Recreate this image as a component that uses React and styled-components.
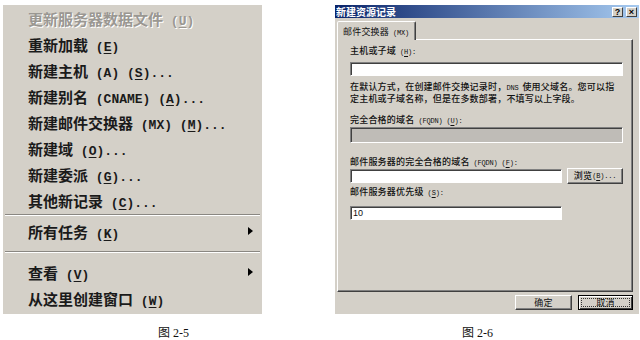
import React from 'react';
import styled, { createGlobalStyle } from 'styled-components';

const GlobalStyle = createGlobalStyle`
    html, body {
        margin: 0;
        padding: 0;
        background: #ffffff;
    }
    body {
        width: 640px;
        height: 340px;
        overflow: hidden;
    }
`;

const FACE = '#d4d0c8';
const CJK = '"Noto Sans CJK SC", "Noto Sans", sans-serif';

const Page = styled.div`
    display: flex;
    align-items: flex-start;
    padding: 5px 0 0 3px;
    gap: 73px;
`;

const Figure = styled.div`
    display: flex;
    flex-flow: column;
`;

const Caption = styled.div`
    margin-top: 12px;
    padding-left: ${({ offset }) => offset}px;
    font-family: "Liberation Serif", "Noto Sans CJK SC", serif;
    font-size: 12px;
    line-height: 14px;
    color: #111;
`;

/* ---------- context menu (图 2-5) ---------- */

const Menu = styled.div`
    width: 259px;
    height: 309px;
    box-sizing: border-box;
    background: ${FACE};
    font-family: ${CJK};
    font-size: 15px;
    font-weight: bold;
`;

const MenuItem = styled.div`
    height: 26px;
    display: flex;
    align-items: center;
    justify-content: space-between;
    padding: 0 9px 0 25px;
    color: ${({ disabled }) => disabled ? '#9a9792' : '#1a1a1a'};
    text-shadow: ${({ disabled }) => disabled ? '1px 1px 0 #ffffff' : 'none'};
    white-space: nowrap;
`;

const Latin = styled.span`
    font-family: "Liberation Mono", "DejaVu Sans Mono", monospace;
    font-size: 13px;
    font-weight: bold;
    line-height: 13px;
`;

const Key = styled.span`
    text-decoration: underline;
    text-underline-offset: 2px;
`;

const Arrow = styled.span`
    width: 0;
    height: 0;
    border-left: 5px solid #000;
    border-top: 4px solid transparent;
    border-bottom: 4px solid transparent;
`;

const MenuSeparator = styled.div`
    margin: ${({ above, below }) => `${above}px 2px ${below}px`};
    border-top: 1px solid #8a8782;
    border-bottom: 1px solid #ffffff;
`;

const MENU = [
    { text: '更新服务器数据文件', pre: ' (', key: 'U', post: ')', disabled: true },
    { text: '重新加载', pre: ' (', key: 'E', post: ')' },
    { text: '新建主机', pre: ' (A) (', key: 'S', post: ')...' },
    { text: '新建别名', pre: ' (CNAME) (', key: 'A', post: ')...' },
    { text: '新建邮件交换器', pre: ' (MX) (', key: 'M', post: ')...' },
    { text: '新建域', pre: ' (', key: 'O', post: ')...' },
    { text: '新建委派', pre: ' (', key: 'G', post: ')...' },
    { text: '其他新记录', pre: ' (', key: 'C', post: ')...' },
    { sep: true, above: 1, below: 2 },
    { text: '所有任务', pre: ' (', key: 'K', post: ')', sub: true },
    { sep: true, above: 7, below: 6 },
    { text: '查看', pre: ' (', key: 'V', post: ')', sub: true },
    { text: '从这里创建窗口', pre: ' (', key: 'W', post: ')' },
];

const ContextMenu = () => (
    <Menu>
        {MENU.map((item, index) => item.sep
            ? <MenuSeparator key={index} above={item.above} below={item.below} />
            : (
                <MenuItem key={index} disabled={item.disabled}>
                    <span>
                        {item.text}
                        <Latin>{item.pre}<Key>{item.key}</Key>{item.post}</Latin>
                    </span>
                    {item.sub && <Arrow />}
                </MenuItem>
            ))}
    </Menu>
);

/* ---------- dialog (图 2-6) ---------- */

const Dialog = styled.div`
    width: 304px;
    height: 309px;
    display: flex;
    flex-flow: column;
    background: ${FACE};
    font-family: ${CJK};
    font-size: 9px;
    letter-spacing: 0.2px;
    color: #111;
`;

const TitleBar = styled.div`
    height: 13px;
    display: flex;
    align-items: center;
    justify-content: space-between;
    padding: 0 2px 0 1px;
    background: linear-gradient(to right, #0a246a, #a6caf0);
`;

const Title = styled.div`
    color: #ffffff;
    font-size: 10px;
    font-weight: bold;
    line-height: 13px;
    letter-spacing: 0;
`;

const TitleButtons = styled.div`
    display: flex;
    gap: 3px;
`;

const TitleButton = styled.div`
    width: 11px;
    height: 10px;
    box-sizing: border-box;
    display: flex;
    align-items: center;
    justify-content: center;
    background: ${FACE};
    border: 1px solid;
    border-color: #ffffff #404040 #404040 #ffffff;
    font-family: "Liberation Sans", sans-serif;
    font-size: 9px;
    font-weight: bold;
    line-height: 8px;
    color: #000;
`;

const Body = styled.div`
    flex: 1;
    display: flex;
    flex-flow: column;
    padding: 3px 6px 0 2px;
`;

const Tab = styled.div`
    align-self: flex-start;
    width: 79px;
    height: 19px;
    box-sizing: border-box;
    margin-bottom: -1px;
    padding: 4px 0 0 5px;
    background: ${FACE};
    border: 1px solid;
    border-bottom: none;
    border-color: #ffffff #404040 transparent #ffffff;
    border-radius: 2px 2px 0 0;
    box-shadow: inset -1px 0 #808080;
    line-height: 12px;
    white-space: nowrap;
    position: relative;
    z-index: 1;
`;

const Panel = styled.div`
    height: 253px;
    box-sizing: border-box;
    padding: 5px 0 0 12px;
    border: 1px solid;
    border-color: #ffffff #404040 #404040 #ffffff;
    box-shadow: inset -1px -1px #808080;
    font-weight: 500;
`;

const Label = styled.div`
    height: 12px;
    line-height: 12px;
    margin-top: ${({ gap }) => gap || 0}px;
    white-space: nowrap;
`;

const Input = styled.div`
    width: ${({ width }) => width}px;
    height: ${({ height }) => height || 14}px;
    box-sizing: border-box;
    margin-top: ${({ gap }) => gap || 0}px;
    padding: 1px 2px;
    background: ${({ disabled }) => disabled ? '#bfbcb7' : '#ffffff'};
    border: 1px solid;
    border-color: #808080 #ffffff #ffffff #808080;
    box-shadow: inset 1px 1px #404040;
    font-family: "Liberation Sans", sans-serif;
    font-size: 9px;
    font-weight: normal;
    line-height: 10px;
    letter-spacing: 0;
`;

const Note = styled.div`
    margin-top: 5px;
    white-space: nowrap;
`;

const NoteLine = styled.div`
    height: 12px;
    line-height: 12px;
`;

const Row = styled.div`
    display: flex;
    align-items: center;
    gap: 5px;
    margin-top: ${({ gap }) => gap || 0}px;
`;

const Button = styled.div`
    width: ${({ width }) => width}px;
    height: ${({ height }) => height}px;
    box-sizing: border-box;
    display: flex;
    align-items: center;
    justify-content: center;
    background: ${FACE};
    border: 1px solid;
    border-color: ${({ primary }) => primary ? '#000' : '#ffffff #404040 #404040 #ffffff'};
    box-shadow: ${({ primary }) => primary
        ? 'inset 1px 1px #ffffff, inset -1px -1px #404040'
        : 'inset -1px -1px #808080'};
    line-height: 10px;
    white-space: nowrap;
`;

const FocusRing = styled.span`
    flex: 1;
    align-self: stretch;
    margin: 2px;
    display: flex;
    align-items: center;
    justify-content: center;
    border: 1px dotted #333;
`;

const Mono = styled.span`
    font-family: "Liberation Mono", monospace;
    font-size: 7px;
    line-height: 7px;
    letter-spacing: -0.2px;
`;

const Footer = styled.div`
    display: flex;
    justify-content: flex-end;
    gap: 6px;
    margin-top: 3px;
`;

const RecordDialog = () => (
    <Dialog>
        <TitleBar>
            <Title>新建资源记录</Title>
            <TitleButtons>
                <TitleButton>?</TitleButton>
                <TitleButton>×</TitleButton>
            </TitleButtons>
        </TitleBar>
        <Body>
            <Tab>邮件交换器<Mono> (MX)</Mono></Tab>
            <Panel>
                <Label>主机或子域<Mono> (<Key>H</Key>):</Mono></Label>
                <Input width={273} gap={5} />
                <Note>
                    <NoteLine>在默认方式，在创建邮件交换记录时，<Mono>DNS </Mono>使用父域名。您可以指</NoteLine>
                    <NoteLine>定主机或子域名称，但是在多数部署，不填写以上字段。</NoteLine>
                </Note>
                <Label gap={9}>完全合格的域名<Mono> (FQDN) (<Key>U</Key>):</Mono></Label>
                <Input width={273} height={16} gap={1} disabled />
                <Label gap={13}>邮件服务器的完全合格的域名<Mono> (FQDN) (<Key>F</Key>):</Mono></Label>
                <Row>
                    <Input width={212} />
                    <Button width={56} height={16}>浏览<Mono> (<Key>B</Key>)...</Mono></Button>
                </Row>
                <Label gap={2}>邮件服务器优先级<Mono> (<Key>S</Key>):</Mono></Label>
                <Input width={212} gap={8}>10</Input>
            </Panel>
            <Footer>
                <Button width={57} height={15}>确定</Button>
                <Button width={55} height={15} primary>
                    <FocusRing>取消</FocusRing>
                </Button>
            </Footer>
        </Body>
    </Dialog>
);

export default function App()
{
    return (
        <>
            <GlobalStyle />
            <Page>
                <Figure>
                    <ContextMenu />
                    <Caption offset={155}>图 2-5</Caption>
                </Figure>
                <Figure>
                    <RecordDialog />
                    <Caption offset={127}>图 2-6</Caption>
                </Figure>
            </Page>
        </>
    );
}
